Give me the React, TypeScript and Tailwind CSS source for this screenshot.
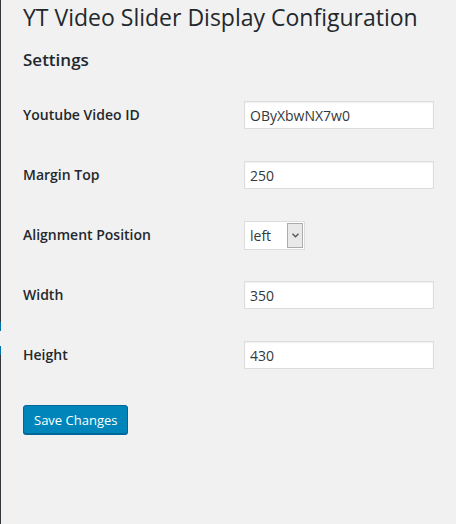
import React from "react";

const rows = [
  { label: "Youtube Video ID", value: "OByXbwNX7w0" },
  { label: "Margin Top", value: "250" },
  { label: "Alignment Position", value: "left", select: true },
  { label: "Width", value: "350" },
  { label: "Height", value: "430" },
];

export default function App() {
  return (
    <div
      className="flex min-h-screen w-[456px] h-[524px] bg-[#f1f1f1] text-[#23282d] overflow-hidden"
      style={{ fontFamily: '"Open Sans", "Noto Sans", sans-serif' }}
    >
      <div className="flex w-px flex-col shrink-0">
        <div className="h-[322px] bg-[#32373c]" />
        <div className="h-[9px] bg-[#0073aa]" />
        <div className="h-[15px] bg-[#f1f1f1]" />
        <div className="h-[9px] bg-[#0073aa]" />
        <div className="flex-1 bg-[#32373c]" />
      </div>
      <div className="flex-1 pl-[22px] pr-[20px]">
        <h1 className="m-0 pt-[1px] text-[23px] leading-[32px] font-normal text-[#23282d]">
          YT Video Slider Display Configuration
        </h1>
        <h2 className="m-0 mt-[15px] text-[17px] leading-[24px] font-semibold text-[#23282d]">
          Settings
        </h2>
        <div className="mt-[13px] flex flex-col">
          {rows.map((r) => (
            <div key={r.label} className="flex h-[60px] items-center">
              <div className="w-[221px] pb-[2px] text-[14px] font-semibold text-[#23282d]">{r.label}</div>
              {r.select ? (
                <div className="flex h-[29px] w-[61px] items-center border border-[#dddddd] bg-white">
                  <span className="flex-1 pl-[5px] text-[14px] text-[#32373c]">{r.value}</span>
                  <div className="mr-px flex h-[25px] w-[16px] items-center justify-center border border-[#acacac] bg-[#e9e9e9]">
                    <svg width="7" height="5" viewBox="0 0 7 5">
                      <path d="M0.5 0.8 L3.5 3.8 L6.5 0.8" fill="none" stroke="#555" strokeWidth="1.4" />
                    </svg>
                  </div>
                </div>
              ) : (
                <div className="flex h-[28px] w-[190px] items-center border border-[#dddddd] bg-white pl-[5px] text-[14px] text-[#32373c] shadow-[inset_0_1px_2px_rgba(0,0,0,0.07)]">
                  {r.value}
                </div>
              )}
            </div>
          ))}
        </div>
        <button className="mt-[20px] h-[29px] rounded-[3px] border border-[#006799] bg-[#0085ba] px-[10px] text-[13px] leading-[26px] text-white shadow-[0_1px_0_#006799]">
          Save Changes
        </button>
      </div>
    </div>
  );
}
